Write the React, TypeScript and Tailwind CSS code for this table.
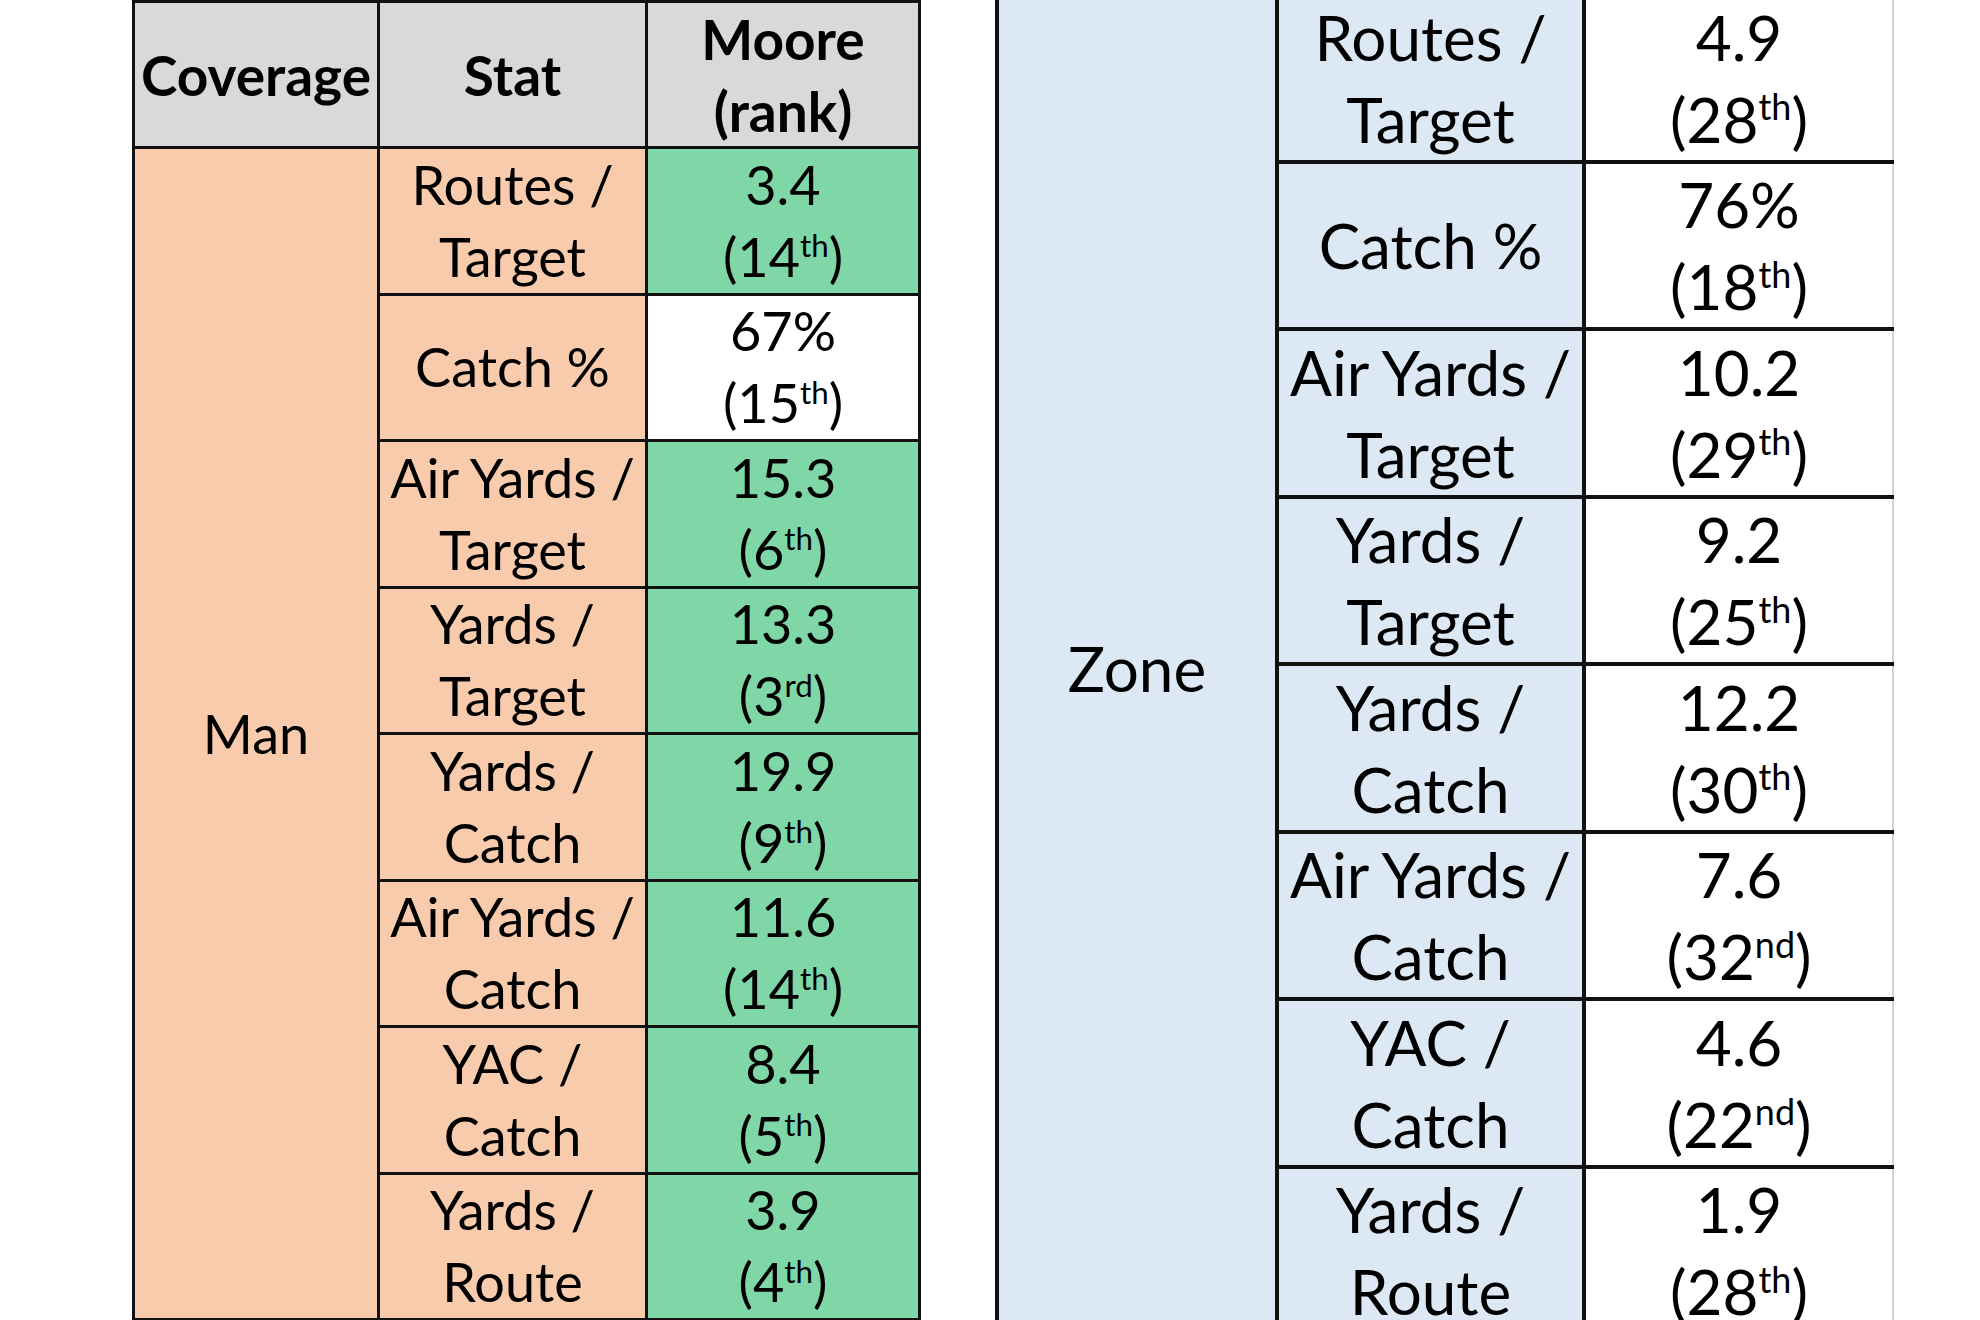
import React from "react";

type Row = { stat: string[]; val: string; num: string; suf: string; green?: boolean };

const manRows: Row[] = [
  { stat: ["Routes /", "Target"], val: "3.4", num: "14", suf: "th", green: true },
  { stat: ["Catch %"], val: "67%", num: "15", suf: "th" },
  { stat: ["Air Yards /", "Target"], val: "15.3", num: "6", suf: "th", green: true },
  { stat: ["Yards /", "Target"], val: "13.3", num: "3", suf: "rd", green: true },
  { stat: ["Yards /", "Catch"], val: "19.9", num: "9", suf: "th", green: true },
  { stat: ["Air Yards /", "Catch"], val: "11.6", num: "14", suf: "th", green: true },
  { stat: ["YAC /", "Catch"], val: "8.4", num: "5", suf: "th", green: true },
  { stat: ["Yards /", "Route"], val: "3.9", num: "4", suf: "th", green: true },
];

const zoneRows: Row[] = [
  { stat: ["Routes /", "Target"], val: "4.9", num: "28", suf: "th" },
  { stat: ["Catch %"], val: "76%", num: "18", suf: "th" },
  { stat: ["Air Yards /", "Target"], val: "10.2", num: "29", suf: "th" },
  { stat: ["Yards /", "Target"], val: "9.2", num: "25", suf: "th" },
  { stat: ["Yards /", "Catch"], val: "12.2", num: "30", suf: "th" },
  { stat: ["Air Yards /", "Catch"], val: "7.6", num: "32", suf: "nd" },
  { stat: ["YAC /", "Catch"], val: "4.6", num: "22", suf: "nd" },
  { stat: ["Yards /", "Route"], val: "1.9", num: "28", suf: "th" },
];

function Rank({ num, suf }: { num: string; suf: string }) {
  return (
    <span className="whitespace-nowrap">
      ({num}
      <sup className="text-[0.58em] -top-[0.62em]">{suf}</sup>)
    </span>
  );
}

export default function App() {
  return (
    <div
      className="w-[1980px] h-[1320px] overflow-hidden bg-white flex items-start text-black"
      style={{ fontFamily: "Lato, 'Open Sans', sans-serif" }}
    >
      {/* Left table */}
      <div className="ml-[132px] grid grid-cols-[242px_265px_270px] grid-rows-[143px_repeat(8,143.5px)] gap-[3px] p-[3px] bg-[#111] text-[54px] leading-[72px]">
        <div className="bg-[#d9d9d9] flex items-center justify-center font-bold whitespace-nowrap text-[55px]">Coverage</div>
        <div className="bg-[#d9d9d9] flex items-center justify-center font-bold text-[55px]">Stat</div>
        <div className="bg-[#d9d9d9] flex flex-col items-center justify-center font-bold text-[55px]">
          <span>Moore</span>
          <span>(rank)</span>
        </div>
        <div className="row-span-8 bg-[#f8cbad] flex items-center justify-center">Man</div>
        {manRows.map((r, i) => (
          <React.Fragment key={i}>
            <div className="bg-[#f8cbad] flex flex-col items-center justify-center whitespace-nowrap">
              {r.stat.map((s, j) => (
                <span key={j}>{s}</span>
              ))}
            </div>
            <div
              className={
                r.green
                  ? "bg-[#7fd6a6] flex flex-col items-center justify-center"
                  : "bg-white flex flex-col items-center justify-center"
              }
            >
              <span>{r.val}</span>
              <Rank num={r.num} suf={r.suf} />
            </div>
          </React.Fragment>
        ))}
      </div>

      {/* Right table */}
      <div className="ml-[74px] -mt-[8px] grid grid-cols-[276px_303px_308px] grid-rows-[repeat(8,163.5px)] gap-[4px] pl-[4px] pt-[4px] bg-[#111] text-[62px] leading-[82px]">
        <div className="row-span-8 bg-[#dde8f5] flex items-center justify-center pt-[8px]">Zone</div>
        {zoneRows.map((r, i) => (
          <React.Fragment key={i}>
            <div className="bg-[#dde8f5] flex flex-col items-center justify-center whitespace-nowrap">
              {r.stat.map((s, j) => (
                <span key={j}>{s}</span>
              ))}
            </div>
            <div className="bg-white flex flex-col items-center justify-center border-r-2 border-[#d4d4d4]">
              <span>{r.val}</span>
              <Rank num={r.num} suf={r.suf} />
            </div>
          </React.Fragment>
        ))}
      </div>
    </div>
  );
}
